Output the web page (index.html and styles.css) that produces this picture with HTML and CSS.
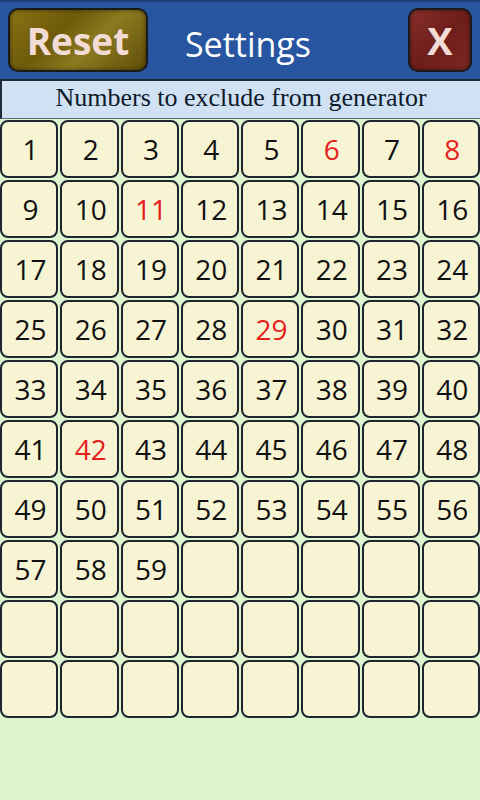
FILE: index.html
```html
<!DOCTYPE html>
<html>
<head>
<meta charset="utf-8">
<link rel="stylesheet" href="styles.css">
</head>
<body>
<div class="app">
  <header class="topbar">
    <button class="btn reset">Reset</button>
    <h1 class="title">Settings</h1>
    <button class="btn close">X</button>
  </header>
  <div class="subtitle">Numbers to exclude from generator</div>
  <div class="grid">
    <div class="cell">1</div><div class="cell">2</div><div class="cell">3</div><div class="cell">4</div><div class="cell">5</div><div class="cell red">6</div><div class="cell">7</div><div class="cell red">8</div>
    <div class="cell">9</div><div class="cell">10</div><div class="cell red">11</div><div class="cell">12</div><div class="cell">13</div><div class="cell">14</div><div class="cell">15</div><div class="cell">16</div>
    <div class="cell">17</div><div class="cell">18</div><div class="cell">19</div><div class="cell">20</div><div class="cell">21</div><div class="cell">22</div><div class="cell">23</div><div class="cell">24</div>
    <div class="cell">25</div><div class="cell">26</div><div class="cell">27</div><div class="cell">28</div><div class="cell red">29</div><div class="cell">30</div><div class="cell">31</div><div class="cell">32</div>
    <div class="cell">33</div><div class="cell">34</div><div class="cell">35</div><div class="cell">36</div><div class="cell">37</div><div class="cell">38</div><div class="cell">39</div><div class="cell">40</div>
    <div class="cell">41</div><div class="cell red">42</div><div class="cell">43</div><div class="cell">44</div><div class="cell">45</div><div class="cell">46</div><div class="cell">47</div><div class="cell">48</div>
    <div class="cell">49</div><div class="cell">50</div><div class="cell">51</div><div class="cell">52</div><div class="cell">53</div><div class="cell">54</div><div class="cell">55</div><div class="cell">56</div>
    <div class="cell">57</div><div class="cell">58</div><div class="cell">59</div><div class="cell"></div><div class="cell"></div><div class="cell"></div><div class="cell"></div><div class="cell"></div>
    <div class="cell"></div><div class="cell"></div><div class="cell"></div><div class="cell"></div><div class="cell"></div><div class="cell"></div><div class="cell"></div><div class="cell"></div>
    <div class="cell"></div><div class="cell"></div><div class="cell"></div><div class="cell"></div><div class="cell"></div><div class="cell"></div><div class="cell"></div><div class="cell"></div>
  </div>
</div>
</body>
</html>
```
FILE: styles.css
```css
html, body {
  margin: 0;
  padding: 0;
  background: #def5d0;
}
.app {
  width: 480px;
  height: 800px;
  background: #def5d0;
  font-family: "Open Sans", "Noto Sans", sans-serif;
}
.topbar {
  height: 79px;
  box-sizing: border-box;
  background: #27559f;
  border-top: 2px solid #1c3f78;
  display: flex;
  align-items: center;
  padding: 0 8px;
}
.btn {
  border: 2px solid #1a1a1a;
  border-radius: 10px;
  height: 64px;
  margin-top: -1px;
  font-family: "Open Sans", "Noto Sans", sans-serif;
  font-weight: 700;
  color: #f3dcd6;
  padding: 0;
  box-shadow: inset 0 0 4px rgba(0,0,0,0.5);
}
.reset {
  width: 140px;
  font-size: 37px;
  background: linear-gradient(135deg, #8a7414 0%, #6e5a0a 35%, #8c7a20 60%, #5f4e08 100%);
}
.close {
  width: 64px;
  font-size: 38px;
  background: linear-gradient(135deg, #8a2f2a 0%, #6e1e1a 50%, #7c2822 100%);
}
.title {
  flex: 1;
  margin: 0;
  text-align: center;
  color: #ffffff;
  font-weight: 400;
  font-size: 34px;
  padding-right: 60px;
  padding-top: 6px;
}
.subtitle {
  height: 40px;
  box-sizing: border-box;
  background: #cfe1f2;
  border-top: 2px solid #1f2a3a;
  border-left: 2px solid #1f2a3a;
  border-bottom: 1px solid #5a6a80;
  font-family: "Liberation Serif", "Times New Roman", serif;
  font-size: 26px;
  color: #0e1a2a;
  text-align: center;
  line-height: 34px;
}
.grid {
  display: grid;
  grid-template-columns: repeat(8, 1fr);
  grid-auto-rows: 58px;
  gap: 2px;
  padding: 1px 0 0;
}
.cell {
  background: #f7f4d4;
  border: 2px solid #1e2530;
  border-radius: 8px;
  display: flex;
  align-items: center;
  justify-content: center;
  font-size: 28px;
  color: #111111;
  padding-left: 3px;
}
.red {
  color: #e5211c;
}
```
